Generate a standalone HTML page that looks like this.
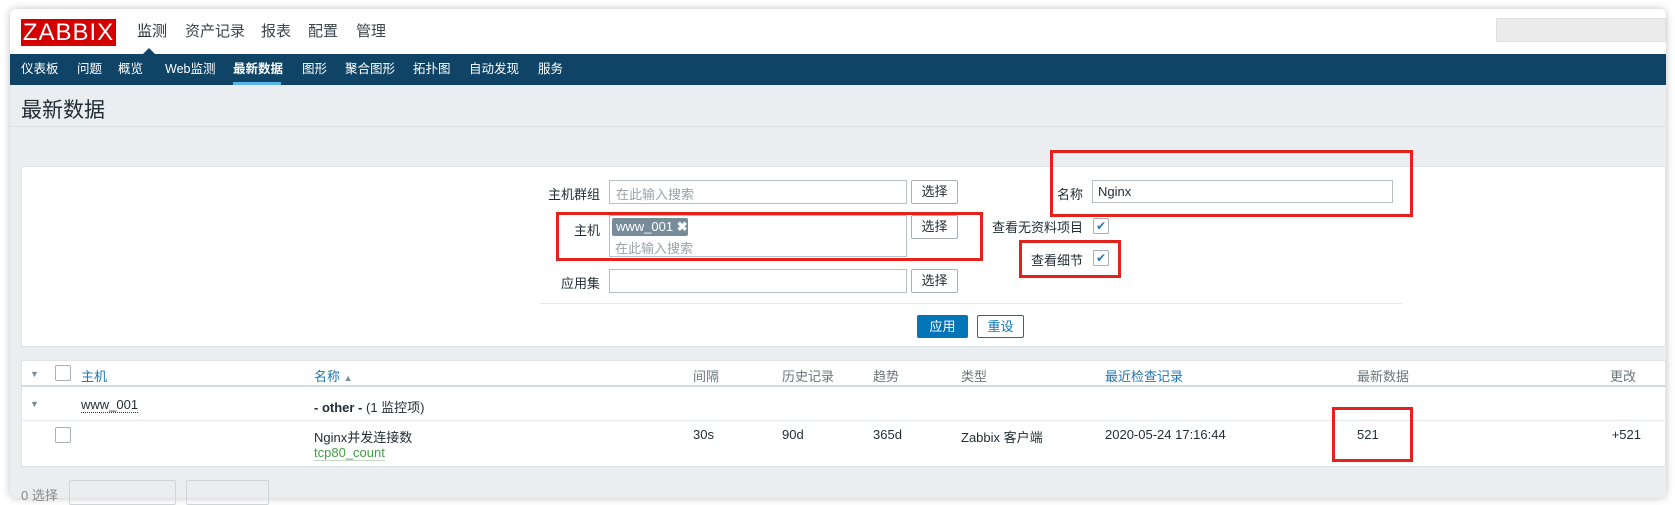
<!DOCTYPE html>
<html><head><meta charset="utf-8"><style>
*{margin:0;padding:0;box-sizing:border-box}
body{width:1675px;height:500px;background:#fff;position:relative;overflow:hidden;font-family:"Liberation Sans","Noto Sans CJK SC",sans-serif;font-size:13px;color:#1f2c33}
.a{position:absolute;white-space:nowrap}
.win{position:absolute;left:10px;top:9px;width:1656px;height:489px;background:#ebeef0;border-radius:6px 6px 6px 6px;box-shadow:0 0 8px rgba(0,0,0,.25);overflow:hidden}
.inp{position:absolute;background:#fff;border:1px solid #b8bfc4}
.btn{position:absolute;background:#fff;border:1px solid #a8b0b5;border-radius:2px;text-align:center;font-size:13px}
.red{position:absolute;border:3px solid #e3221c}
.cb{position:absolute;width:16px;height:16px;border:1px solid #a7b0b6;background:#fff;border-radius:2px}
.ph{color:#9aa3a8}
.th{color:#1f76b4}
</style></head><body>
<div class="win"></div>
<div class="a" style="left:10px;top:9px;width:1656px;height:45px;background:#fff;border-radius:6px 6px 0 0"></div>
<div class="a" style="left:21px;top:19px;width:95px;height:27px;background:#d40000;color:#fff;font-size:24px;line-height:27px;text-align:center;letter-spacing:1px">ZABBIX</div>
<div class="a" style="left:137px;top:20px;font-size:15px">监测</div>
<div class="a" style="left:185px;top:20px;font-size:15px;color:#3a454c">资产记录</div>
<div class="a" style="left:261px;top:20px;font-size:15px;color:#3a454c">报表</div>
<div class="a" style="left:308px;top:20px;font-size:15px;color:#3a454c">配置</div>
<div class="a" style="left:356px;top:20px;font-size:15px;color:#3a454c">管理</div>
<div class="a" style="left:1496px;top:18px;width:170px;height:24px;background:#ebebeb;border:1px solid #e0e0e0"></div>
<div class="a" style="left:10px;top:54px;width:1656px;height:31px;background:#104466"></div>
<div class="a" style="left:142px;top:48px;width:0;height:0;border-left:7px solid transparent;border-right:7px solid transparent;border-bottom:7px solid #104466"></div>
<div class="a" style="top:58px;left:21px;color:#fff;font-size:12.5px">仪表板</div>
<div class="a" style="top:58px;left:77px;color:#fff;font-size:12.5px">问题</div>
<div class="a" style="top:58px;left:118px;color:#fff;font-size:12.5px">概览</div>
<div class="a" style="top:58px;left:165px;color:#fff;font-size:12.5px">Web监测</div>
<div class="a" style="top:58px;left:233px;color:#fff;font-size:12.5px;font-weight:bold">最新数据</div>
<div class="a" style="top:58px;left:302px;color:#fff;font-size:12.5px">图形</div>
<div class="a" style="top:58px;left:345px;color:#fff;font-size:12.5px">聚合图形</div>
<div class="a" style="top:58px;left:413px;color:#fff;font-size:12.5px">拓扑图</div>
<div class="a" style="top:58px;left:469px;color:#fff;font-size:12.5px">自动发现</div>
<div class="a" style="top:58px;left:538px;color:#fff;font-size:12.5px">服务</div>
<div class="a" style="left:233px;top:82px;width:48px;height:3px;background:#5cb3e8"></div>
<div class="a" style="left:21px;top:94px;font-size:21px">最新数据</div>
<div class="a" style="left:10px;top:126px;width:1656px;height:1px;background:#dde1e4"></div>
<div class="a" style="left:21px;top:166px;width:1645px;height:181px;background:#fff;border:1px solid #dfe4e7"></div>
<div class="a" style="left:540px;top:184px;width:60px;text-align:right">主机群组</div>
<div class="inp" style="left:609px;top:180px;width:298px;height:24px;padding:3px 6px"><span class="ph">在此输入搜索</span></div>
<div class="btn" style="left:911px;top:180px;width:47px;height:24px;line-height:22px">选择</div>
<div class="a" style="left:540px;top:220px;width:60px;text-align:right">主机</div>
<div class="inp" style="left:609px;top:215px;width:298px;height:42px"></div>
<div class="a" style="left:612px;top:218px;width:76px;height:18px;background:#768d99;color:#fff;border-radius:2px;padding:1px 4px;font-size:13px">www_001 <b>✖</b></div>
<div class="a ph" style="left:615px;top:238px">在此输入搜索</div>
<div class="btn" style="left:911px;top:215px;width:47px;height:24px;line-height:22px">选择</div>
<div class="a" style="left:540px;top:273px;width:60px;text-align:right">应用集</div>
<div class="inp" style="left:609px;top:269px;width:298px;height:24px"></div>
<div class="btn" style="left:911px;top:269px;width:47px;height:24px;line-height:22px">选择</div>
<div class="a" style="left:540px;top:303px;width:862px;height:1px;background:#e4e8ea"></div>
<div class="a" style="left:917px;top:315px;width:51px;height:23px;background:#0275b8;color:#fff;border-radius:2px;text-align:center;line-height:23px">应用</div>
<div class="btn" style="left:977px;top:315px;width:47px;height:23px;line-height:21px;border-color:#0275b8;color:#0275b8">重设</div>
<div class="red" style="left:556px;top:212px;width:427px;height:49px"></div>
<div class="a" style="left:1040px;top:184px;width:43px;text-align:right">名称</div>
<div class="inp" style="left:1092px;top:180px;width:301px;height:23px;padding:3px 5px">Nginx</div>
<div class="red" style="left:1050px;top:150px;width:363px;height:67px"></div>
<div class="a" style="left:983px;top:217px;width:100px;text-align:right">查看无资料项目</div>
<div class="cb" style="left:1093px;top:218px;color:#1f76b4;font-size:12px;line-height:14px;text-align:center">✔</div>
<div class="a" style="left:1023px;top:250px;width:60px;text-align:right">查看细节</div>
<div class="cb" style="left:1093px;top:250px;color:#1f76b4;font-size:12px;line-height:14px;text-align:center">✔</div>
<div class="red" style="left:1019px;top:240px;width:102px;height:38px"></div>
<div class="a" style="left:21px;top:360px;width:1645px;height:107px;background:#fff;border:1px solid #dfe4e7"></div>
<div class="a" style="left:21px;top:385px;width:1645px;height:2px;background:#d5dce0"></div>
<div class="a" style="left:21px;top:420px;width:1645px;height:1px;background:#e6e9eb"></div>
<div class="a" style="left:30px;top:369px;color:#768d99;font-size:9px">▼</div>
<div class="cb" style="left:55px;top:365px"></div>
<div class="a th" style="left:81px;top:366px">主机</div>
<div class="a th" style="left:314px;top:366px">名称 <span style="color:#768d99;font-size:9px">▲</span></div>
<div class="a" style="left:693px;top:366px;color:#6b757a">间隔</div>
<div class="a" style="left:782px;top:366px;color:#6b757a">历史记录</div>
<div class="a" style="left:873px;top:366px;color:#6b757a">趋势</div>
<div class="a" style="left:961px;top:366px;color:#6b757a">类型</div>
<div class="a th" style="left:1105px;top:366px">最近检查记录</div>
<div class="a" style="left:1357px;top:366px;color:#6b757a">最新数据</div>
<div class="a" style="left:1610px;top:366px;color:#6b757a">更改</div>
<div class="a" style="left:30px;top:399px;color:#768d99;font-size:9px">▼</div>
<div class="a" style="left:81px;top:397px;border-bottom:1px dotted #333">www_001</div>
<div class="a" style="left:314px;top:397px"><b>- other -</b> (1 监控项)</div>
<div class="cb" style="left:55px;top:427px"></div>
<div class="a" style="left:314px;top:427px">Nginx并发连接数</div>
<div class="a" style="left:314px;top:445px;color:#429e47;border-bottom:1px solid #c4d8c5">tcp80_count</div>
<div class="a" style="left:693px;top:427px">30s</div>
<div class="a" style="left:782px;top:427px">90d</div>
<div class="a" style="left:873px;top:427px">365d</div>
<div class="a" style="left:961px;top:427px">Zabbix 客户端</div>
<div class="a" style="left:1105px;top:427px">2020-05-24 17:16:44</div>
<div class="a" style="left:1357px;top:427px">521</div>
<div class="a" style="left:1603px;top:427px;width:38px;text-align:right">+521</div>
<div class="red" style="left:1332px;top:407px;width:81px;height:55px"></div>
<div class="a" style="left:21px;top:485px;color:#888">0 选择</div>
<div class="a" style="left:69px;top:480px;width:107px;height:25px;border:1px solid #cfd4d7;border-radius:2px"></div>
<div class="a" style="left:186px;top:480px;width:83px;height:25px;border:1px solid #cfd4d7;border-radius:2px"></div>
</body></html>
